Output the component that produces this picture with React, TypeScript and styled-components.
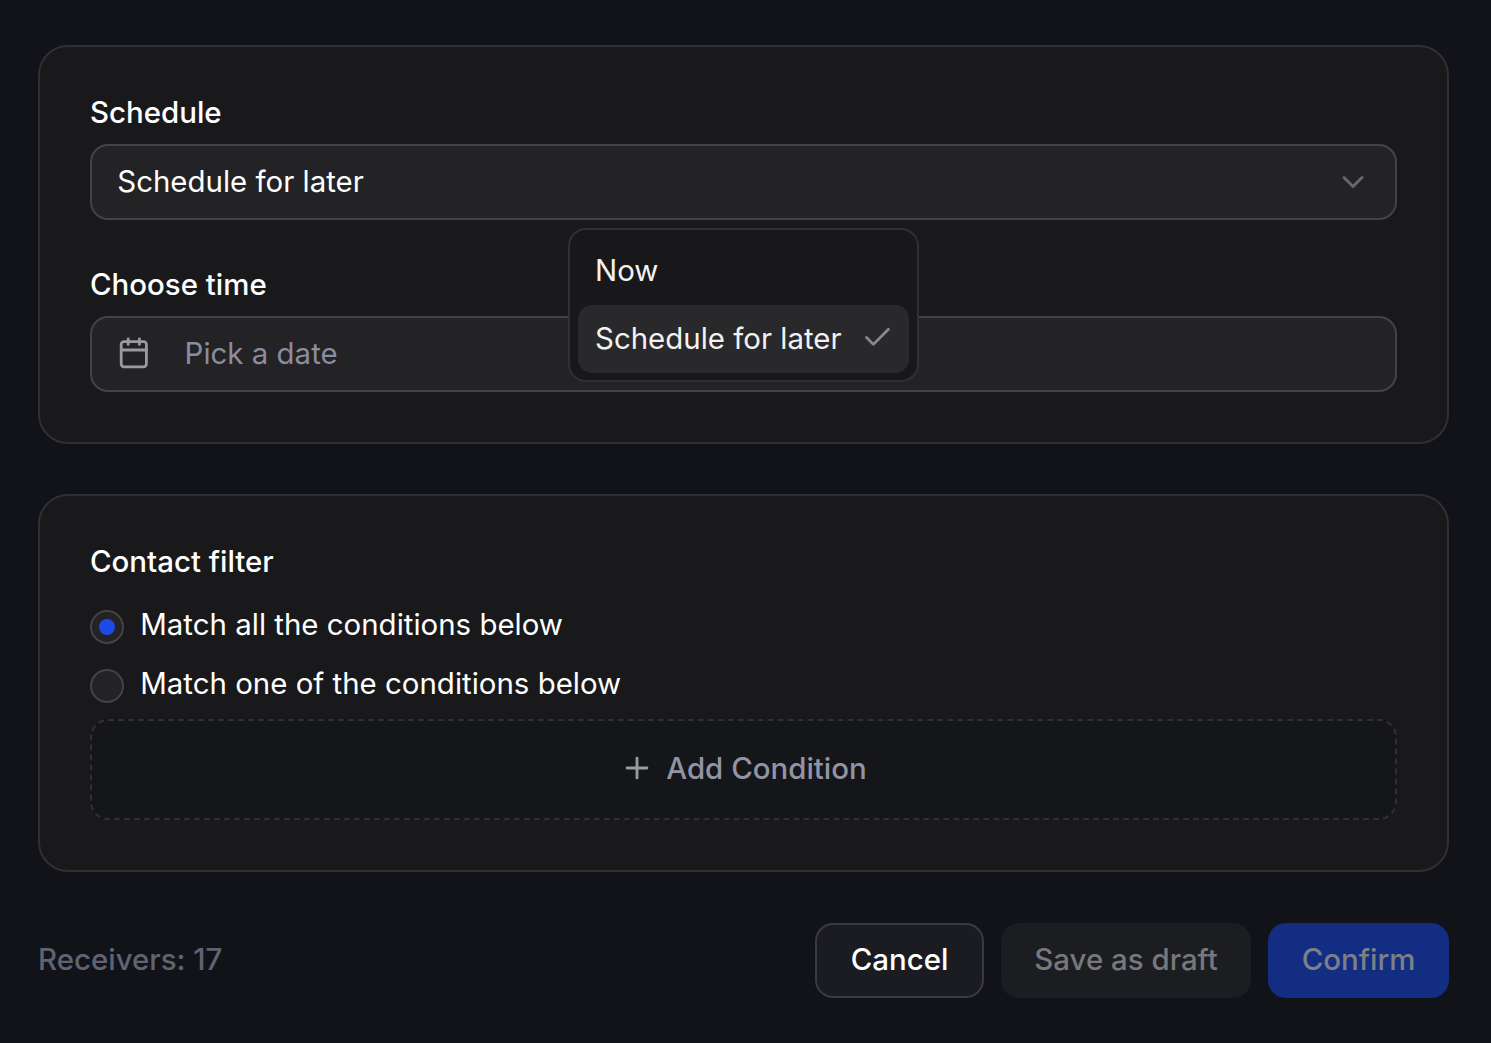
import React from 'react';
import styled, { createGlobalStyle } from 'styled-components';
import { Calendar, Check, ChevronDown, Plus } from 'lucide-react';

const GlobalStyle = createGlobalStyle`
  html, body {
    margin: 0;
    padding: 0;
    background-color: #111319;
  }
  * {
    box-sizing: border-box;
  }
`;

const Page = styled.div`
  width: 1491px;
  height: 1043px;
  padding: 45px 42px 45px 38px;
  display: flex;
  flex-direction: column;
  font-family: Inter, 'Liberation Sans', sans-serif;
  font-size: 29.44px;
  color: #fff;
  background-color: #111319;
`;

const Card = styled.section<{ $height: number; $mb: number }>`
  height: ${(p) => p.$height}px;
  margin-bottom: ${(p) => p.$mb}px;
  padding: 50px;
  display: flex;
  flex-direction: column;
  background-color: #19191b;
  border: 2px solid #303033;
  border-radius: 30px;
`;

const Label = styled.div<{ $mt?: number; $mb: number }>`
  height: 32px;
  margin-top: ${(p) => p.$mt || 0}px;
  margin-bottom: ${(p) => p.$mb}px;
  font-weight: 500;
  line-height: 30px;
  color: #fff;
`;

const FieldWrap = styled.div`
  position: relative;
`;

const Field = styled.div`
  height: 76px;
  padding: 0 24px 2px 25px;
  display: flex;
  align-items: center;
  background-color: #232325;
  border: 2px solid #434346;
  border-radius: 18px;
`;

const FieldValue = styled.span`
  flex: 1;
  margin-left: 0.25px;
  color: #fff;
`;

const Chevron = styled(ChevronDown)`
  margin-top: 2px;
`;

const Placeholder = styled.span`
  margin-left: 34px;
  color: #8b8c9e;
`;

const Menu = styled.div`
  position: absolute;
  top: 84px;
  left: 478px;
  z-index: 2;
  width: 351px;
  height: 154px;
  padding: 7px 8px;
  background-color: #18181a;
  border: 2px solid #303033;
  border-radius: 18px;
`;

const MenuItem = styled.div<{ $active?: boolean }>`
  height: 68px;
  padding: 0 15.5px 3px 17px;
  display: flex;
  align-items: center;
  justify-content: space-between;
  color: #f2f2f2;
  background-color: ${(p) => (p.$active ? '#29292b' : 'transparent')};
  border-radius: 14px;
`;

const RadioRow = styled.div<{ $mb: number }>`
  height: 34px;
  margin-bottom: ${(p) => p.$mb}px;
  display: flex;
  align-items: center;
  gap: 16.25px;
`;

const Radio = styled.span<{ $checked?: boolean }>`
  width: 34px;
  height: 34px;
  display: flex;
  align-items: center;
  justify-content: center;
  background-color: #232325;
  border: 2px solid #434346;
  border-radius: 50%;
  &::after {
    content: '';
    display: ${(p) => (p.$checked ? 'block' : 'none')};
    width: 16px;
    height: 16px;
    background-color: #1a4ae8;
    border-radius: 50%;
  }
`;

const RadioText = styled.span`
  padding-bottom: 5px;
  color: #fff;
`;

const AddCondition = styled.div`
  height: 102px;
  padding-bottom: 2px;
  display: flex;
  align-items: center;
  justify-content: center;
  gap: 12px;
  font-weight: 500;
  color: #9394a3;
  background-color: #15161a;
  border: 2px dashed #303033;
  border-radius: 18px;
`;

const Footer = styled.div`
  height: 75px;
  display: flex;
  align-items: center;
  gap: 17px;
`;

const Receivers = styled.div`
  flex: 1;
  padding-bottom: 4px;
  font-weight: 500;
  color: #606370;
`;

const Button = styled.button<{ $width: number; $bg: string; $color: string; $border?: string }>`
  width: ${(p) => p.$width}px;
  height: 75px;
  padding: 0 0 4px;
  font-family: inherit;
  font-size: 29.44px;
  font-weight: 500;
  color: ${(p) => p.$color};
  background-color: ${(p) => p.$bg};
  border: ${(p) => (p.$border ? `2px solid ${p.$border}` : 'none')};
  border-radius: 18px;
`;

const App = (): JSX.Element => {
  return (
    <Page>
      <GlobalStyle />
      <Card $height={399} $mb={50}>
        <Label $mb={15}>Schedule</Label>
        <FieldWrap>
          <Field>
            <FieldValue>Schedule for later</FieldValue>
            <Chevron size={36} color="#66666c" strokeWidth={2} />
          </Field>
          <Menu>
            <MenuItem>Now</MenuItem>
            <MenuItem $active>
              Schedule for later
              <Check size={33} color="#88888e" strokeWidth={2} />
            </MenuItem>
          </Menu>
        </FieldWrap>
        <Label $mt={49} $mb={15}>Choose time</Label>
        <Field>
          <Calendar size={33.6} color="#9a9aa3" strokeWidth={2} />
          <Placeholder>Pick a date</Placeholder>
        </Field>
      </Card>

      <Card $height={378} $mb={51}>
        <Label $mb={32}>Contact filter</Label>
        <RadioRow $mb={25}>
          <Radio $checked />
          <RadioText>Match all the conditions below</RadioText>
        </RadioRow>
        <RadioRow $mb={16}>
          <Radio />
          <RadioText>Match one of the conditions below</RadioText>
        </RadioRow>
        <AddCondition>
          <Plus size={34} color="#9a9aa3" strokeWidth={2} />
          Add Condition
        </AddCondition>
      </Card>

      <Footer>
        <Receivers>Receivers: 17</Receivers>
        <Button $width={169} $bg="#1b1c21" $color="#fff" $border="#3a3a3e">Cancel</Button>
        <Button $width={250} $bg="#1c1d20" $color="#77787c">Save as draft</Button>
        <Button $width={181} $bg="#132d82" $color="#7c8088">Confirm</Button>
      </Footer>
    </Page>
  );
};

export default App;
